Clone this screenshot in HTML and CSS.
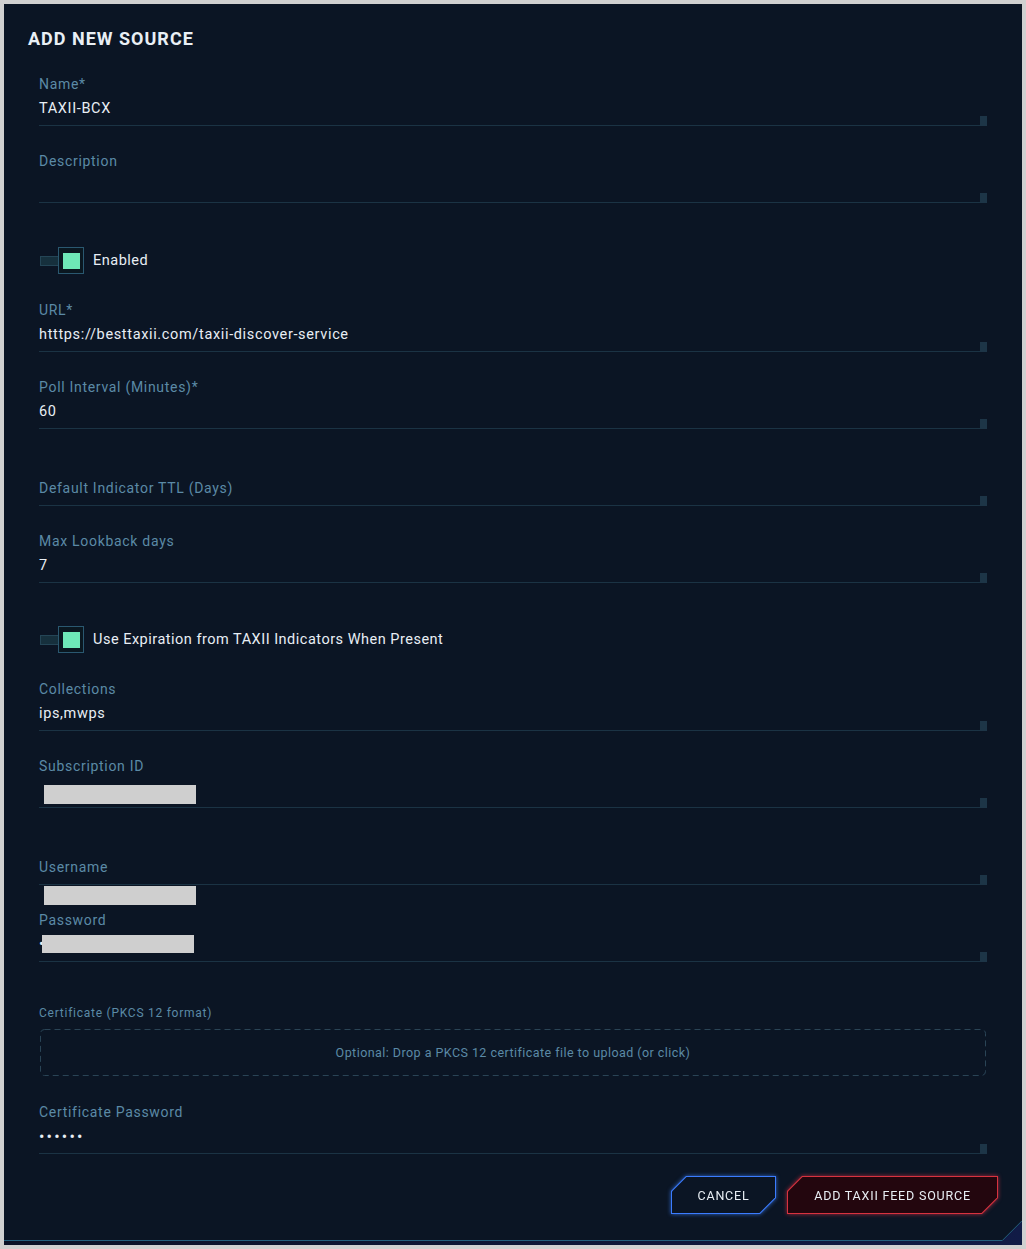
FILE: index.html
```html
<!DOCTYPE html>
<html lang="en">
<head>
  <meta charset="UTF-8" />
  <meta name="viewport" content="width=device-width, initial-scale=1.0" />
  <title>Add New Source</title>
  <link rel="stylesheet" href="styles.css">
</head>
<body>

  <div class="dialog">
    <h2 class="title">ADD NEW SOURCE</h2>

    <form class="form">
      <div class="field">
        <div class="label">Name*</div>
        <div class="input">TAXII-BCX</div>
      </div>

      <div class="field">
        <div class="label">Description</div>
        <div class="input"></div>
      </div>

      <div class="toggle-row">
        <span class="toggle"><span class="track"></span><span class="knob"><span class="dot"></span></span></span>
        <span class="toggle-label">Enabled</span>
      </div>

      <div class="field">
        <div class="label">URL*</div>
        <div class="input">htttps://besttaxii.com/taxii-discover-service</div>
      </div>

      <div class="field">
        <div class="label">Poll Interval (Minutes)*</div>
        <div class="input">60</div>
      </div>

      <div class="field field-empty">
        <div class="label">Default Indicator TTL (Days)</div>
        <div class="input"></div>
      </div>

      <div class="field">
        <div class="label">Max Lookback days</div>
        <div class="input">7</div>
      </div>

      <div class="toggle-row toggle-row-2">
        <span class="toggle"><span class="track"></span><span class="knob"><span class="dot"></span></span></span>
        <span class="toggle-label">Use Expiration from TAXII Indicators When Present</span>
      </div>

      <div class="field">
        <div class="label">Collections</div>
        <div class="input">ips,mwps</div>
      </div>

      <div class="field">
        <div class="label">Subscription ID</div>
        <div class="input"><span class="redact redact-sub"></span></div>
      </div>

      <div class="field field-empty">
        <div class="label">Username</div>
        <div class="input"></div>
        <span class="redact redact-user"></span>
      </div>

      <div class="field">
        <div class="label">Password</div>
        <div class="input">&bull;</div>
        <span class="redact redact-pass"></span>
      </div>

      <div class="cert">
        <div class="cert-label">Certificate (PKCS 12 format)</div>
        <div class="dropzone">
          <svg class="dash" viewBox="0 0 946 47" preserveAspectRatio="none">
            <rect x="0.5" y="0.5" width="945" height="46" rx="4" ry="4" fill="none" stroke="#2a4456" stroke-width="1" stroke-dasharray="6 4" />
          </svg>
          <span>Optional: Drop a PKCS 12 certificate file to upload (or click)</span>
        </div>
      </div>

      <div class="field">
        <div class="label">Certificate Password</div>
        <div class="input dots">&bull;&bull;&bull;&bull;&bull;&bull;</div>
      </div>
    </form>

    <div class="actions">
      <div class="btn btn-cancel"><div class="btn-shape"><div class="btn-inner">CANCEL</div></div></div>
      <div class="btn btn-add"><div class="btn-shape"><div class="btn-inner">ADD TAXII FEED SOURCE</div></div></div>
    </div>

    <svg class="edge" viewBox="0 0 1018 25" preserveAspectRatio="none">
      <defs>
        <linearGradient id="edgeFill" x1="0" y1="0" x2="1" y2="0">
          <stop offset="0" stop-color="#0b1226" />
          <stop offset="1" stop-color="#111b46" />
        </linearGradient>
      </defs>
      <polygon points="0,21 998,21 1018,1 1018,25 0,25" fill="url(#edgeFill)" />
      <polyline points="0,20.5 998.3,20.5 1018,0.8" fill="none" stroke="#23607e" stroke-width="1" />
    </svg>
  </div>

</body>
</html>
```

FILE: styles.css
```css
body {
  margin: 0;
  padding: 4px;
  background: #d0d0d0;
  font-family: Roboto, "Liberation Sans", sans-serif;
}

.dialog {
  position: relative;
  box-sizing: border-box;
  width: 1018px;
  height: 1241px;
  padding: 24px 24px 0 24px;
  background: #0b1524;
  overflow: hidden;
}

.title {
  margin: 0;
  font-size: 18px;
  line-height: 22px;
  font-weight: 700;
  letter-spacing: 1px;
  color: #e9eff5;
}

.form {
  margin: 25px 11px 0 11px;
}

.field {
  position: relative;
  margin-bottom: 26px;
}

.label {
  font-size: 14px;
  line-height: 18px;
  color: #5b8aa6;
  letter-spacing: 0.7px;
}

.input {
  position: relative;
  box-sizing: border-box;
  height: 27px;
  margin-top: 6px;
  padding-top: 1px;
  padding-bottom: 7px;
  border-bottom: 1px solid #1b3344;
  font-size: 14.5px;
  line-height: 18px;
  color: #e8eef4;
  letter-spacing: 0.65px;
}

.input::after {
  content: "";
  position: absolute;
  right: 0;
  bottom: -1px;
  width: 7px;
  height: 10px;
  background: #1d3547;
}

.field-empty .label {
  padding-top: 24px;
}

.field-empty .input {
  height: 9px;
  margin-top: 0;
  padding-top: 0;
}

.dots {
  font-size: 16px;
  letter-spacing: 2.2px;
}

.redact {
  position: absolute;
  display: block;
  width: 152px;
  height: 19px;
  background: #cfcfcf;
}

.input .redact-sub {
  position: static;
  margin: 3px 0 0 5px;
}

.redact-user {
  top: 52px;
  left: 5px;
}

.redact-pass {
  top: 24px;
  left: 3px;
  height: 18px;
}

.toggle-row {
  display: flex;
  align-items: center;
  height: 27px;
  padding: 18px 0 27px 0;
}

.toggle-row-2 {
  padding-top: 17px;
  padding-bottom: 27px;
}

.toggle {
  display: flex;
  align-items: center;
  padding-left: 1px;
}

.track {
  display: block;
  box-sizing: border-box;
  width: 18px;
  height: 10px;
  background: #16303d;
  border: 1px solid #244556;
  border-right: none;
}

.knob {
  display: flex;
  align-items: center;
  justify-content: center;
  box-sizing: border-box;
  width: 26px;
  height: 27px;
  background: #0a1720;
  border: 1px solid #2a5870;
}

.dot {
  display: block;
  width: 17px;
  height: 16px;
  background: #6ee8b7;
}

.toggle-label {
  margin-left: 9px;
  font-size: 14.5px;
  line-height: 18px;
  color: #e8eef4;
  letter-spacing: 0.5px;
}

.cert {
  padding-top: 17px;
  margin-bottom: 27px;
}

.cert-label {
  font-size: 12px;
  line-height: 16px;
  color: #5b8aa6;
  letter-spacing: 0.75px;
  margin-bottom: 8px;
}

.dropzone {
  position: relative;
  box-sizing: border-box;
  height: 47px;
  margin: 0 1px;
  display: flex;
  align-items: center;
  justify-content: center;
  font-size: 12.5px;
  color: #5b8aa6;
  letter-spacing: 0.45px;
  cursor: pointer;
}

.dash {
  position: absolute;
  left: 0;
  top: 0;
  width: 100%;
  height: 100%;
}

.actions {
  display: flex;
  justify-content: flex-end;
  gap: 11px;
  margin-top: -4px;
}

.btn {
  height: 38px;
  cursor: pointer;
}

.btn-cancel {
  width: 105px;
  filter: drop-shadow(0 0 2px rgba(60, 130, 255, 0.75));
}

.btn-add {
  width: 211px;
  filter: drop-shadow(0 0 2px rgba(230, 50, 70, 0.7));
}

.btn-shape {
  box-sizing: border-box;
  height: 100%;
  padding: 1px;
  clip-path: polygon(15px 0, 100% 0, 100% calc(100% - 16px), calc(100% - 16px) 100%, 0 100%, 0 15px);
}

.btn-inner {
  height: 100%;
  display: flex;
  align-items: center;
  justify-content: center;
  font-size: 12.5px;
  letter-spacing: 0.8px;
  color: #e8eef4;
  clip-path: polygon(14.5px 0, 100% 0, 100% calc(100% - 15.5px), calc(100% - 15.5px) 100%, 0 100%, 0 14.5px);
}

.btn-cancel .btn-shape {
  background: #3b7cff;
}

.btn-cancel .btn-inner {
  background: #0b1524;
}

.btn-add .btn-shape {
  background: #d8323f;
}

.btn-add .btn-inner {
  background: #23060e;
}

.edge {
  position: absolute;
  left: 0;
  bottom: 0;
  width: 1018px;
  height: 25px;
}
```
